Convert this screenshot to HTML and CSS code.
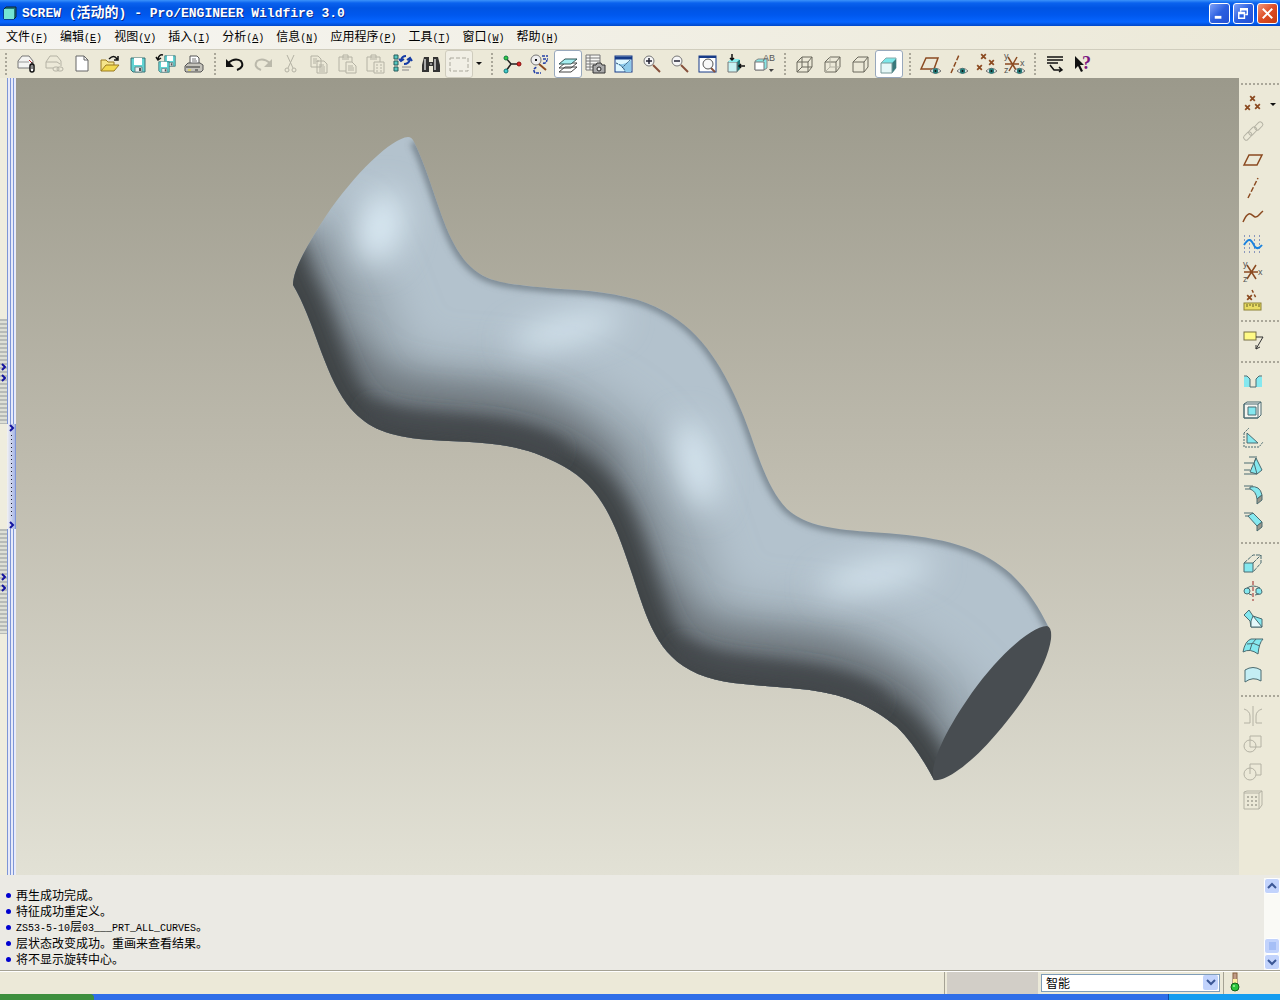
FILE: index.html
```html
<!DOCTYPE html>
<html lang="zh-CN">
<head>
    <meta charset="UTF-8">
    <meta name="viewport" content="width=device-width, initial-scale=1.0">
    <title>SCREW (活动的) - Pro/ENGINEER Wildfire 3.0</title>
    <link rel="stylesheet" href="styles.css">
</head>
<body>
    <svg class="defs" aria-hidden="true">
        <symbol id="eye" viewBox="0 0 12 8"><path d="M0 4Q6-2 12 4Q6 9 0 4Z" fill="#fff" stroke="#666" stroke-width="1"/><circle cx="6" cy="4" r="3" fill="#267a78" stroke="none"/><circle cx="6" cy="4" r="1" fill="#111" stroke="none"/></symbol>
        <symbol id="cross" viewBox="0 0 6 6"><path d="M1 1L5 5M5 1L1 5" stroke="#8b4a20" stroke-width="1.5"/></symbol>
        <symbol id="floppy" viewBox="0 0 16 16"><path d="M1 1H15V15H3L1 13Z" fill="#62d3d3" stroke="#3a7074"/><path d="M4 1H12V8H4Z" fill="#fff"/><path d="M5 10H12V15H5Z" fill="#eee" stroke="#67898b"/><path d="M9 11H11V14H9Z" fill="#555"/></symbol>
    </svg>

    <header class="title-bar">
        <svg class="app-icon" viewBox="0 0 14 14"><path d="M1 3L3 1H13V11L11 13H1Z" fill="#207878" stroke="#123"/><path d="M1 3H11V13H1Z" fill="#74e4d4"/></svg>
        <h1>SCREW (<span>活动的</span>) - Pro/ENGINEER Wildfire 3.0</h1>
        <div class="window-buttons">
            <button aria-label="最小化"><svg viewBox="0 0 20 20"><path d="M5 14H12" stroke="#fff" stroke-width="3"/></svg></button>
            <button aria-label="还原"><svg viewBox="0 0 20 20"><path d="M7 8V5H14V11H12M7 6H14M5 9H11V15H5ZM5 10H11" fill="none" stroke="#fff" stroke-width="1.5"/></svg></button>
            <button class="close" aria-label="关闭"><svg viewBox="0 0 20 20"><path d="M5 5L15 15M15 5L5 15" stroke="#fff" stroke-width="2"/></svg></button>
        </div>
    </header>

    <nav class="menu-bar">
        <button>文件<span>(<u>F</u>)</span></button>
        <button>编辑<span>(<u>E</u>)</span></button>
        <button>视图<span>(<u>V</u>)</span></button>
        <button>插入<span>(<u>I</u>)</span></button>
        <button>分析<span>(<u>A</u>)</span></button>
        <button>信息<span>(<u>N</u>)</span></button>
        <button>应用程序<span>(<u>P</u>)</span></button>
        <button>工具<span>(<u>T</u>)</span></button>
        <button>窗口<span>(<u>W</u>)</span></button>
        <button>帮助<span>(<u>H</u>)</span></button>
    </nav>

    <div class="toolbar">
        <i class="grip"></i>
        <button aria-label="设置工作目录"><svg viewBox="0 0 24 24"><path d="M4 9L8 4H15L19 9V16H4Z" fill="#f4f4f2" stroke="#777"/><path d="M4 10H15" stroke="#999"/><path d="M15 8L18 11" stroke="#b22"/><rect x="16" y="12" width="4" height="8" rx="2" fill="#fff" stroke="#111" stroke-width="1.5"/><path d="M18 10V17" stroke="#111"/></svg></button>
        <button aria-label="擦除"><svg viewBox="0 0 24 24" class="off"><path d="M4 10L8 4H15L19 9V14M4 10V16H11M4 10H15L18 12"/><rect x="11" y="15" width="6" height="4" rx="2"/><rect x="15" y="15" width="6" height="4" rx="2"/></svg></button>
        <button aria-label="新建"><svg viewBox="0 0 24 24"><path d="M6 4H14L18 8V19H6Z" fill="#fff" stroke="#666"/><path d="M14 4V8H18" fill="none" stroke="#666"/></svg></button>
        <button aria-label="打开"><svg viewBox="0 0 24 24"><path d="M3 19V8H8L10 10H16V13" fill="#f5e58a" stroke="#9a7b22"/><path d="M3 19L8 13H21L16 19Z" fill="#f2d94e" stroke="#9a7b22"/><path d="M11 7Q16 2 19 7M20 4V8H16" fill="none" stroke="#111" stroke-width="1.5"/></svg></button>
        <button aria-label="保存"><svg viewBox="0 0 24 24"><use href="#floppy" x="4" y="5" width="16" height="16"/></svg></button>
        <button aria-label="保存副本"><svg viewBox="0 0 24 24"><use href="#floppy" x="10" y="3" width="12" height="12"/><use href="#floppy" x="4" y="9" width="12" height="12"/><path d="M9 3Q5 2 4 7M2 5L4 8L7 6" fill="none" stroke="#111" stroke-width="1.5"/></svg></button>
        <button aria-label="打印"><svg viewBox="0 0 24 24"><path d="M8 12V4H15L17 6V12" fill="#fff" stroke="#555"/><path d="M10 7H14M10 9H15" stroke="#777"/><path d="M3 14L6 11H18L21 13V18L19 20H4L3 19Z" fill="#c4c2ba" stroke="#555"/><path d="M4 15H18" stroke="#333"/><path d="M6 18H9" stroke="#ed2"/><path d="M13 18H16" stroke="#333"/></svg></button>
        <i class="grip"></i>
        <button aria-label="撤消"><svg viewBox="0 0 24 24"><path d="M5 11Q12 5 18 9Q22 15 14 18" fill="none" stroke="#111" stroke-width="2"/><path d="M3 7V15H11Z" fill="#111"/></svg></button>
        <button aria-label="重做"><svg viewBox="0 0 24 24"><path d="M19 11Q12 5 6 9Q2 15 10 18" fill="none" stroke="#bbb9ab" stroke-width="2"/><path d="M21 7V15H13Z" fill="#bbb9ab"/></svg></button>
        <button aria-label="剪切"><svg viewBox="0 0 24 24" class="off"><path d="M8 3L14 16M15 3L9 16"/><circle cx="8" cy="18" r="2"/><circle cx="15" cy="18" r="2"/></svg></button>
        <button aria-label="复制"><svg viewBox="0 0 24 24" class="off"><path d="M4 4H11L14 7V15H4ZM6 7H10M6 9H12M6 11H9M10 9H17L20 12V21H10ZM12 13H17M12 15H18M12 17H18M12 19H18"/></svg></button>
        <button aria-label="粘贴"><svg viewBox="0 0 24 24" class="off"><path d="M4 5H17V10M4 5V19H11M8 6V3H13V6M7 7H14M11 10H17L21 14V21H11ZM13 14H18M13 16H19M13 18H19"/></svg></button>
        <button aria-label="选择性粘贴"><svg viewBox="0 0 24 24" class="off"><path d="M4 5H17V10M4 5V19H11M8 6V3H13V6M7 7H14M11 10H21V21H11ZM13 13H15M17 13H19M13 16H15M17 16H19M13 19H15M17 19H19"/></svg></button>
        <button aria-label="再生"><svg viewBox="0 0 24 24"><path d="M3 3H7V7H3ZM3 9H7V13H3ZM3 15H7V19H3Z" fill="#55c8c0" stroke="#285b5b"/><path d="M10 8Q11 4 15 4M19 7Q18 12 13 12M16 8L19 6L21 9M8 7L10 9L13 7" fill="none" stroke="#153ca5" stroke-width="2"/><path d="M11 15H20M11 18H18" stroke="#888"/></svg></button>
        <button aria-label="查找"><svg viewBox="0 0 24 24"><path d="M5 5H10V10H14V5H19L21 13V20H14V14H10V20H3V13Z" fill="#333"/><path d="M6 7V18M16 7V18" stroke="#aaa" stroke-width="2"/><path d="M11 12H13" stroke="#eee"/></svg></button>
        <button class="framed" aria-label="选取框"><svg viewBox="0 0 24 24"><rect x="3" y="6" width="18" height="13" fill="none" stroke="#aaa89c" stroke-dasharray="4 2"/></svg></button>
        <button class="drop" aria-label="更多选取"><svg viewBox="0 0 12 12"><path d="M3 4H9L6 7Z" fill="#111"/></svg></button>
        <i class="grip"></i>
        <button aria-label="旋转中心"><svg viewBox="0 0 24 24"><path d="M6 6L11 12H20M11 12L6 19" fill="none" stroke="#222" stroke-width="1.5"/><circle cx="6" cy="6" r="2" fill="#3c4" stroke="#174"/><circle cx="19" cy="12" r="2" fill="#d22" stroke="#811"/><circle cx="6" cy="19" r="2" fill="#4cc" stroke="#177"/></svg></button>
        <button aria-label="定向模式"><svg viewBox="0 0 24 24"><circle cx="8" cy="8" r="5" fill="#eee" stroke="#777"/><path d="M8 7V9" stroke="#111" stroke-width="2"/><path d="M11 12L18 18" stroke="#8b4a20" stroke-width="2"/><path d="M14 4H20M15 7H20M15 11Q18 12 19 8M7 21Q4 17 9 15M8 21H13" fill="none" stroke="#2440a8" stroke-dasharray="3 1" stroke-width="1.5"/></svg></button>
        <button class="active" aria-label="层"><svg viewBox="0 0 24 24"><path d="M3 20L9 15H21L15 20ZM3 16L9 11H21L15 16Z" fill="#fff" stroke="#444"/><path d="M3 12L9 7H21L15 12Z" fill="#a5edf0" stroke="#355"/></svg></button>
        <button aria-label="视图管理器"><svg viewBox="0 0 24 24"><path d="M2 3H16V18H2ZM6 3V18M2 6H16M2 9H16M2 12H16M2 15H16" fill="#f7f7f4" stroke="#777"/><path d="M9 13H12L13 11H17L18 13H21V21H9Z" fill="#aaa" stroke="#333"/><circle cx="15" cy="17" r="2" fill="#eee" stroke="#222"/></svg></button>
        <button aria-label="重画"><svg viewBox="0 0 24 24"><rect x="3" y="4" width="17" height="16" fill="#dff7ff" stroke="#173b87"/><path d="M3 6H20" stroke="#173b87" stroke-width="3"/><path d="M4 12Q11 14 13 20H19V8Q14 13 4 12" fill="#8ec9ea"/><path d="M4 11Q12 14 13 20M10 16L18 8" fill="none" stroke="#357" stroke-dasharray="2 1"/></svg></button>
        <button aria-label="放大"><svg viewBox="0 0 24 24"><path d="M13 13L20 20" stroke="#86503b" stroke-width="2"/><circle cx="9" cy="9" r="5" fill="#f5f5f5" stroke="#777"/><path d="M6 9H12M9 6V12" stroke="#223" stroke-width="1.5"/></svg></button>
        <button aria-label="缩小"><svg viewBox="0 0 24 24"><path d="M13 13L20 20" stroke="#86503b" stroke-width="2"/><circle cx="9" cy="9" r="5" fill="#f5f5f5" stroke="#777"/><path d="M6 9H12" stroke="#223" stroke-width="1.5"/></svg></button>
        <button aria-label="重新调整"><svg viewBox="0 0 24 24"><rect x="3" y="4" width="17" height="16" fill="#fff" stroke="#173b87"/><path d="M3 5H20" stroke="#173b87" stroke-width="2"/><path d="M15 16L19 20" stroke="#86503b" stroke-width="2"/><circle cx="12" cy="12" r="5" fill="#f8f8f8" stroke="#555"/></svg></button>
        <button aria-label="重定向"><svg viewBox="0 0 24 24"><path d="M4 10L7 8H16V17L13 20H4Z" fill="#267c7c"/><path d="M4 10H13V20H4Z" fill="#c9f3f3" stroke="#777"/><path d="M4 10L7 7H16L13 10Z" fill="#8ee"/><path d="M8 2V8M6 6L8 8L10 6M21 14H15M17 12L15 14L17 16" fill="none" stroke="#111" stroke-width="1.5"/></svg></button>
        <button aria-label="保存的视图"><svg viewBox="0 0 24 24"><path d="M3 9L6 7H15V16L12 18H3Z" fill="#88e5e4" stroke="#888"/><path d="M3 10H12V18H3Z" fill="#fff" stroke="#777"/><text x="11" y="9">AB</text><path d="M17 17H22L19 20Z" fill="#444"/></svg></button>
        <i class="grip"></i>
        <button aria-label="线框"><svg viewBox="0 0 24 24" class="wire"><path d="M4 10H15V20H4ZM9 5H19V15H9ZM4 10L9 5M15 10L19 5M4 20L9 15M15 20L19 15"/></svg></button>
        <button aria-label="隐藏线"><svg viewBox="0 0 24 24" class="wire"><path d="M4 10H15V20H4ZM4 10L9 5H19V15L15 20M15 10L19 5"/><path class="faint" d="M9 5V15H19M4 20L9 15"/></svg></button>
        <button aria-label="无隐藏线"><svg viewBox="0 0 24 24" class="wire"><path d="M4 10H15V20H4ZM4 10L9 5H19V15L15 20M15 10L19 5"/></svg></button>
        <button class="active" aria-label="着色"><svg viewBox="0 0 24 24"><path d="M4 11L9 6H19V16L15 21Z" fill="#7ce8ea" stroke="#8aa"/><path d="M15 11L19 7V16L15 21Z" fill="#39797c"/><path d="M4 11H15V21H4Z" fill="#e6f8f8" stroke="#799"/></svg></button>
        <i class="grip"></i>
        <button aria-label="基准平面显示"><svg viewBox="0 0 24 24" class="datum"><path d="M3 17L8 6H20L16 17Z"/><use href="#eye" x="12" y="15" width="11" height="8"/></svg></button>
        <button aria-label="基准轴显示"><svg viewBox="0 0 24 24" class="datum"><path d="M5 21L13 3" stroke-dasharray="5 2"/><use href="#eye" x="11" y="15" width="11" height="8"/></svg></button>
        <button aria-label="基准点显示"><svg viewBox="0 0 24 24"><use href="#cross" x="6" y="1" width="7" height="7"/><use href="#cross" x="14" y="7" width="7" height="7"/><use href="#cross" x="2" y="12" width="7" height="7"/><use href="#eye" x="12" y="15" width="11" height="8"/></svg></button>
        <button aria-label="坐标系显示"><svg viewBox="0 0 24 24" class="datum"><path d="M3 12H17M6 5L14 18M15 5L7 19"/><text x="2" y="7">y</text><text x="2" y="21">z</text><text x="18" y="14">x</text><use href="#eye" x="12" y="15" width="11" height="8"/></svg></button>
        <i class="grip"></i>
        <button aria-label="命令设置"><svg viewBox="0 0 24 24"><path d="M4 5H20M4 8H20M4 11H15M7 13L11 18H18M16 15L19 18L16 20" fill="none" stroke="#111" stroke-width="1.5"/></svg></button>
        <button aria-label="上下文帮助"><svg viewBox="0 0 24 24"><path d="M4 4V17L7 14L10 20L12 19L9 13H13Z" fill="#111"/><text class="question" x="11" y="17">?</text></svg></button>
    </div>

    <main class="workspace">
        <aside class="sash">
            <div class="sash-strip">
                <button class="sash-grip" aria-label="展开导航器"><svg viewBox="0 0 7 20"><path d="M2 2L5 5L2 8M2 13L5 16L2 19"/></svg></button>
                <button class="sash-grip" aria-label="展开浏览器"><svg viewBox="0 0 7 20"><path d="M2 2L5 5L2 8M2 13L5 16L2 19"/></svg></button>
            </div>
            <div class="sash-lines">
                <button class="sash-handle" aria-label="展开面板"><svg viewBox="0 0 7 8"><path d="M2 1L5 4L2 7"/></svg><i></i><svg viewBox="0 0 7 8"><path d="M2 1L5 4L2 7"/></svg></button>
            </div>
        </aside>

        <section class="viewport" aria-label="模型">
            <svg viewBox="16 78 1223 797">
                <defs>
                    <clipPath id="body-clip">
                        <path d="M293 285C293 268 310 241 326 216C355 173 392 138 408 137Q412 137 414 142C430 174 439 216 454 244C471 276 491 282 520 285C565 291 597 288 638 300C694 318 720 360 741 410C756 445 764 485 787 509C810 530 846 530 896 534C953 539 985 551 1011 574C1029 591 1039 608 1049 628L1000 720L934 780C923 759 911 741 897 727C871 706 844 693 800 689C755 684 719 686 690 670C653 650 645 611 630 568C614 520 600 486 563 466C514 438 471 444 419 439C385 435 365 427 347 404C323 371 314 320 293 285Z"/>
                    </clipPath>
                    <filter id="blur-s" x="-20%" y="-20%" width="140%" height="140%"><feGaussianBlur stdDeviation="9"/></filter>
                    <filter id="blur-m" x="-20%" y="-20%" width="140%" height="140%"><feGaussianBlur stdDeviation="16"/></filter>
                    <filter id="blur-l" x="-50%" y="-50%" width="200%" height="200%"><feGaussianBlur stdDeviation="22"/></filter>
                    <filter id="blur-xs" x="-20%" y="-20%" width="140%" height="140%"><feGaussianBlur stdDeviation="3"/></filter>
                    <path id="low-edge" d="M276 240L293 285C314 320 323 371 347 404C365 427 385 435 419 439C471 444 514 438 563 466C600 486 614 520 630 568C645 611 653 650 690 670C719 686 755 684 800 689C844 693 871 706 897 727C911 741 923 759 934 780L950 820"/>
                    <path id="top-edge" d="M414 142C430 174 439 216 454 244C471 276 491 282 520 285C565 291 597 288 638 300C694 318 720 360 741 410C756 445 764 485 787 509C810 530 846 530 896 534C953 539 985 551 1011 574C1029 591 1039 608 1049 628"/>
                </defs>
                <g clip-path="url(#body-clip)" fill="none">
                    <path d="M280 130H1060V790H280Z" fill="#b3c2cd"/>
                    <use href="#low-edge" stroke="#97a4ad" stroke-width="160" filter="url(#blur-l)"/>
                    <!-- flat turns are shaded deeper than the steep ones -->
                    <g stroke="#727b82" stroke-width="54" filter="url(#blur-m)">
                        <path d="M330 350C365 410 430 405 500 415C550 424 580 450 600 480"/>
                        <path d="M645 590C675 655 730 650 800 660C850 666 890 690 915 720"/>
                    </g>
                    <use href="#low-edge" stroke="#70787f" stroke-width="70" filter="url(#blur-m)"/>
                    <use href="#low-edge" stroke="#3f4447" stroke-width="44" filter="url(#blur-s)"/>
                    <g stroke="#44494d" stroke-width="20" filter="url(#blur-s)">
                        <path d="M365 412C420 430 500 420 560 455"/>
                        <path d="M675 650C740 678 820 665 880 705"/>
                    </g>
                    <g fill="#dbebf5" filter="url(#blur-m)">
                        <ellipse cx="380" cy="228" rx="22" ry="38" transform="rotate(15 380 228)"/>
                        <ellipse cx="566" cy="330" rx="58" ry="12" transform="rotate(-14 566 330)"/>
                        <ellipse cx="696" cy="465" rx="17" ry="46" transform="rotate(-14 696 465)"/>
                        <ellipse cx="876" cy="575" rx="60" ry="12" transform="rotate(-12 876 575)"/>
                    </g>
                    <use href="#top-edge" stroke="#78858f" stroke-width="8" filter="url(#blur-xs)"/>
                </g>
                <path d="M934 780C929 769 941 738 967 700C993 661 1029 627 1047 626Q1052 627 1051 639C1047 668 1020 708 991 740C967 767 944 782 934 780Z" fill="#484d51"/>
            </svg>
        </section>

        <aside class="feature-bar">
            <i class="grip"></i>
            <div class="tool-row">
                <button aria-label="基准点"><svg viewBox="0 0 24 24"><use href="#cross" x="8" y="3" width="7" height="7"/><use href="#cross" x="3" y="12" width="7" height="7"/><use href="#cross" x="13" y="11" width="7" height="7"/></svg></button>
                <button class="drop" aria-label="更多基准点"><svg viewBox="0 0 12 12"><path d="M3 5H9L6 8Z" fill="#111"/></svg></button>
            </div>
            <button aria-label="链接"><svg viewBox="0 0 24 24" class="off"><rect x="2" y="14" width="9" height="5" rx="2" transform="rotate(-45 6 16)"/><rect x="7" y="9" width="9" height="5" rx="2" transform="rotate(-45 11 11)"/><rect x="13" y="4" width="9" height="5" rx="2" transform="rotate(-45 17 6)"/></svg></button>
            <button aria-label="基准平面"><svg viewBox="0 0 24 24" class="datum"><path d="M3 17L8 7H21L16 17Z"/></svg></button>
            <button aria-label="基准轴"><svg viewBox="0 0 24 24" class="datum"><path d="M7 22L17 2" stroke-dasharray="5 2"/></svg></button>
            <button aria-label="曲线"><svg viewBox="0 0 24 24" class="datum"><path d="M2 18C8 4 11 12 14 13C17 14 18 10 22 7"/></svg></button>
            <button aria-label="草绘"><svg viewBox="0 0 24 24"><path d="M3 4H21M3 8H21M3 12H21M3 16H21M3 20H21" stroke="#2845a0" stroke-dasharray="1 4"/><path d="M3 13C9 3 11 10 14 15Q17 18 21 13" fill="none" stroke="#1b83df" stroke-width="2"/></svg></button>
            <button aria-label="坐标系"><svg viewBox="0 0 24 24" class="datum"><path d="M3 12H17M6 5L15 19M15 5L6 19"/><text x="2" y="7">y</text><text x="2" y="22">z</text><text x="17" y="15">x</text></svg></button>
            <button aria-label="分析特征"><svg viewBox="0 0 24 24"><use href="#cross" x="5" y="6" width="7" height="7"/><path d="M11 2L15 10" stroke="#8b4a20" stroke-width="1.5" stroke-dasharray="3 2"/><rect x="3" y="15" width="17" height="7" fill="#e9dc63" stroke="#8c8235"/><path d="M6 16V19M9 16V18M12 16V19M15 16V18M18 16V19" stroke="#665e28"/></svg></button>
            <i class="grip"></i>
            <button aria-label="注释"><svg viewBox="0 0 24 24"><rect x="3" y="3" width="12" height="8" fill="#fffa86" stroke="#777043"/><path d="M15 8H22L15 20M15 16V20L19 18" fill="none" stroke="#333"/></svg></button>
            <i class="grip"></i>
            <button aria-label="孔"><svg viewBox="0 0 24 24" class="solid"><path d="M3 7V17H9V9L6 6ZM21 7V17H15V9L18 6Z" stroke="none"/><path d="M3 6H6L9 9V17H15V9L18 6H21" fill="none"/></svg></button>
            <button aria-label="壳"><svg viewBox="0 0 24 24" class="solid"><path d="M3 6L6 4H20V17L17 20H3Z" fill="#f5f4ef"/><path d="M3 6H17V20H3ZM17 6L20 4" fill="none"/><path d="M7 9H15V17H7Z"/></svg></button>
            <button aria-label="筋"><svg viewBox="0 0 24 24" class="solid"><path d="M3 7V21H18L22 16M3 7L8 2" fill="none" stroke-dasharray="2 1"/><path d="M6 7V17H17Z"/></svg></button>
            <button aria-label="拔模"><svg viewBox="0 0 24 24" class="solid"><path d="M9 18L15 4L21 16L16 20Z"/><path d="M8 3H16M3 9H12M3 16H9M3 20H16M15 4L13 9L16 20" fill="none"/></svg></button>
            <button aria-label="倒圆角"><svg viewBox="0 0 24 24" class="solid"><path d="M9 5Q19 3 21 13L16 17Q15 9 9 7Z"/><path d="M16 17L21 13V18L16 22Z" fill="#99978b"/><path d="M3 4H12M4 7H9" fill="none"/></svg></button>
            <button aria-label="倒角"><svg viewBox="0 0 24 24" class="solid"><path d="M7 6L12 3L21 12L16 16Z"/><path d="M16 16L21 12V17L16 21Z" fill="#99978b"/><path d="M3 3H12M4 6H7" fill="none"/></svg></button>
            <i class="grip"></i>
            <button aria-label="拉伸"><svg viewBox="0 0 24 24" class="solid"><path d="M3 12H12V21H3Z"/><path d="M3 12L12 4H20V12L12 21M12 12L20 4" fill="none" stroke-dasharray="4 1"/></svg></button>
            <button aria-label="旋转"><svg viewBox="0 0 24 24" class="solid"><circle cx="6" cy="12" r="3"/><path d="M15 10Q20 7 21 13Q20 17 15 14Z"/><path d="M6 9Q12 5 19 9M8 15L11 16M14 16L18 15" fill="none"/><path d="M12 2V22" stroke="#922" stroke-dasharray="4 2"/></svg></button>
            <button aria-label="扫描混合"><svg viewBox="0 0 24 24" class="solid"><path d="M3 8L8 3L12 9L21 12V20H10L9 14Z"/><path d="M10 14L12 9L21 20H10V14Z" fill="#e4f8fa"/></svg></button>
            <button aria-label="边界混合"><svg viewBox="0 0 24 24" class="solid"><path d="M2 17Q4 6 10 4H22Q18 8 17 19Q9 13 2 17Z"/><path d="M6 9Q13 7 19 11M15 4Q10 8 9 15" fill="none"/></svg></button>
            <button aria-label="造型"><svg viewBox="0 0 24 24" class="solid"><path class="pale" d="M4 7Q12 2 20 7V18Q12 13 4 19Z"/></svg></button>
            <i class="grip"></i>
            <button aria-label="镜像"><svg viewBox="0 0 24 24" class="off"><path d="M12 2V22M3 5Q9 7 9 12V19H3M21 5Q15 7 15 12V19H21"/></svg></button>
            <button aria-label="合并"><svg viewBox="0 0 24 24" class="off"><circle cx="9" cy="14" r="6"/><path d="M9 4H20V15H9Z"/></svg></button>
            <button aria-label="修剪"><svg viewBox="0 0 24 24" class="off"><circle cx="9" cy="14" r="6"/><path d="M9 14V4H20V15H15"/></svg></button>
            <button aria-label="阵列"><svg viewBox="0 0 24 24" class="off"><path d="M3 4L6 3H21V17L18 21H3ZM3 5H18V21M18 5L21 3"/><path d="M6 9H17M6 13H17M6 17H17" stroke-width="2" stroke-dasharray="2 2"/></svg></button>
        </aside>
    </main>

    <section class="messages">
        <ul>
            <li><p>再生成功完成。</p></li>
            <li><p>特征成功重定义。</p></li>
            <li><p><span>ZS53-5-10</span>层<span>03___PRT_ALL_CURVES</span>。</p></li>
            <li><p>层状态改变成功。重画来查看结果。</p></li>
            <li><p>将不显示旋转中心。</p></li>
        </ul>
        <div class="scrollbar">
            <button aria-label="向上滚动"><svg viewBox="0 0 14 14"><path d="M3 9L7 5L11 9" fill="none" stroke="#3b5796" stroke-width="2"/></svg></button>
            <i class="track"></i>
            <button aria-label="滑块"><svg viewBox="0 0 14 14"><path d="M4 4H11M4 6H11M4 8H11M4 10H11" stroke="#89aaf0"/></svg></button>
            <button aria-label="向下滚动"><svg viewBox="0 0 14 14"><path d="M3 5L7 9L11 5" fill="none" stroke="#3b5796" stroke-width="2"/></svg></button>
        </div>
    </section>

    <footer class="status-bar">
        <div class="status-cell"></div>
        <div class="select-box">
            <select aria-label="选取过滤器"><option>智能</option></select>
            <svg viewBox="0 0 15 15"><rect width="15" height="15" rx="2" fill="#c2d3fc"/><path d="M4 5L8 9L12 5" fill="none" stroke="#3b5796" stroke-width="2"/></svg>
        </div>
        <div class="traffic"><svg viewBox="0 0 12 20"><rect x="4" y="1" width="4" height="11" fill="#c09a86" stroke="#85613f"/><path d="M4 7H8V11H4Z" fill="#fff0a0"/><circle cx="6" cy="15" r="4" fill="#2cc43c" stroke="#126018"/><circle cx="5" cy="14" r="1" fill="#a5f5a5"/></svg></div>
    </footer>
    <div class="taskbar"><i></i><b></b></div>
</body>
</html>
```
FILE: styles.css
```css
* {
    box-sizing: border-box;
}

body {
    display: flex;
    flex-direction: column;
    min-height: 100vh;
    margin: 0;
    background: #ece9d8;
    color: #000;
    font-family: "Noto Sans CJK SC", sans-serif;
    font-size: 12px;
}

button {
    flex: none;
    margin: 0;
    padding: 0;
    border: 0;
    background: none;
    color: inherit;
    font: inherit;
}

svg {
    display: block;
}

.defs {
    position: absolute;
    width: 0;
    height: 0;
}

/* title bar */
.title-bar {
    display: flex;
    align-items: center;
    height: 26px;
    padding: 0 2px 0 3px;
    background: linear-gradient(#3c93fa 0, #0a62ee 3px, #0054e3 8px, #0058ee 15px, #0665ff 22px, #0047c8 26px);
}

.app-icon {
    width: 14px;
    height: 14px;
}

h1 {
    flex: 1;
    margin: 0 0 0 5px;
    color: #fff;
    font-family: "Liberation Mono", "Noto Sans CJK SC", monospace;
    font-size: 13px;
    line-height: 20px;
    white-space: pre;
    text-shadow: 1px 1px #0a2c8c;
}

h1 span {
    font-size: 14px;
}

.window-buttons {
    display: flex;
    gap: 3px;
}

.window-buttons button {
    width: 21px;
    height: 21px;
    border: 1px solid #fff;
    border-radius: 3px;
    background: linear-gradient(135deg, #7fa2f8, #2c5fe0 50%, #2450d4);
}

.window-buttons .close {
    background: linear-gradient(135deg, #f0977c, #dd4c24 50%, #c43c12);
}

/* menu */
.menu-bar {
    display: flex;
    gap: 12px;
    height: 24px;
    padding-left: 6px;
    border-bottom: 1px solid #d0cdbd;
    background: linear-gradient(to right, #f6f5f1, #ece9d8);
}

.menu-bar button {
    line-height: 20px;
}

.menu-bar span,
.messages span {
    font-family: "Liberation Mono", monospace;
    font-size: 10px;
}

/* toolbars */
.toolbar {
    display: flex;
    height: 28px;
    margin-left: -1px;
}

.toolbar button,
.feature-bar button {
    width: 28px;
    height: 28px;
    padding: 2px;
}

.toolbar .grip {
    width: 13px;
    height: 24px;
    margin-top: 3px;
    background: repeating-linear-gradient(#aaa799 0 2px, transparent 2px 4px) center / 2px 100% no-repeat;
}

.toolbar .active,
.toolbar .framed {
    padding: 1px;
    border: 1px solid #98a8bc;
    border-radius: 3px;
    background: #fff;
}

.toolbar .framed {
    border-color: #cfccbd;
    background: #f1efe5;
}

.toolbar .drop,
.feature-bar .drop {
    width: 12px;
    padding: 8px 0;
}

.toolbar text,
.feature-bar text {
    fill: #555;
    stroke: none;
    font: 9px "Liberation Sans", sans-serif;
}

.toolbar .question {
    fill: #7b1680;
    font: bold 18px "Liberation Serif", serif;
}

.off {
    fill: none;
    stroke: #b4b2a4;
}

.wire {
    fill: none;
    stroke: #6b695d;
}

.faint {
    stroke: #b4b2a4;
}

.datum {
    fill: none;
    stroke: #8b4a20;
    stroke-width: 1.5;
}

.solid {
    fill: #85e8ef;
    stroke: #4b6b70;
}

.pale {
    fill: #c4eef4;
}

/* work area */
.workspace {
    display: flex;
    flex: 1;
}

.sash {
    display: flex;
    width: 16px;
    background: #efedde;
}

.sash svg {
    width: 7px;
    fill: none;
    stroke: #1414a0;
    stroke-width: 2;
}

.sash-strip {
    display: flex;
    flex-direction: column;
    justify-content: center;
    gap: 105px;
    width: 7px;
}

.sash-grip {
    width: 7px;
    height: 105px;
    background: repeating-linear-gradient(#b7bbb8 0 2px, #dddfd6 2px 4px);
}

.sash-lines {
    display: flex;
    align-items: center;
    width: 9px;
    background: repeating-linear-gradient(to right, #7e96d6 0 1px, #e7eafa 1px 3px);
}

.sash-handle {
    display: flex;
    flex-direction: column;
    width: 9px;
    height: 105px;
    padding: 0 1px;
    border-right: 1px solid #7e96d6;
    background: linear-gradient(to right, #f2f2f4, #a8b6e6);
}

.sash-handle i {
    flex: 1;
    width: 1px;
    margin: 3px;
    background: repeating-linear-gradient(#223 0 1px, transparent 1px 4px);
}

.viewport {
    flex: 1;
    min-width: 0;
    background: linear-gradient(#9b998b, #bfbcaf 50%, #e2e1d5);
}

.viewport svg {
    width: 100%;
}

.feature-bar {
    width: 41px;
}

.feature-bar .grip {
    display: block;
    height: 13px;
    margin-left: 2px;
    background: repeating-linear-gradient(to right, #aaa799 0 2px, transparent 2px 4px) center / 100% 2px no-repeat;
}

.feature-bar .grip:first-child {
    height: 12px;
}

.feature-bar > button {
    display: block;
}

.tool-row {
    display: flex;
}

/* messages */
.messages {
    display: flex;
    justify-content: space-between;
    height: 96px;
    padding-top: 3px;
    border-bottom: 1px solid #a5a294;
    background: #ebeae4;
}

.messages ul {
    margin: 0;
    padding: 9px 0 0 6px;
    list-style: none;
}

.messages li {
    display: flex;
    align-items: center;
    height: 16px;
    line-height: 16px;
}

.messages p {
    margin: 0;
}

.messages li::before {
    content: "";
    width: 5px;
    height: 5px;
    margin-right: 5px;
    border-radius: 50%;
    background: #0000d0;
}

.scrollbar {
    display: flex;
    flex-direction: column;
    width: 16px;
    background: #fafaf6;
}

.scrollbar button {
    height: 16px;
    border: 1px solid #fff;
    border-radius: 3px;
    background: #c2d3fc;
}

.track {
    flex: 1;
}

/* status */
.status-bar {
    display: flex;
    align-items: center;
    justify-content: flex-end;
    height: 23px;
    border-top: 1px solid #fff;
}

.status-cell {
    width: 94px;
    height: 22px;
    border-left: 1px solid #a5a294;
    background: #d2cec7;
    box-shadow: inset 2px 0 #ece9d8;
}

.select-box {
    position: relative;
    width: 179px;
    margin: 0 3px 0 3px;
}

.select-box select {
    display: block;
    width: 100%;
    height: 18px;
    padding: 0 4px;
    border: 1px solid #7f9db9;
    border-radius: 0;
    background: #fff;
    color: #000;
    font: 12px "Noto Sans CJK SC", sans-serif;
    line-height: 16px;
    appearance: none;
}

.select-box svg {
    position: absolute;
    top: 1px;
    right: 2px;
    width: 15px;
    height: 15px;
    pointer-events: none;
}

.traffic {
    width: 57px;
    height: 22px;
    padding: 0 5px;
    border-left: 1px solid #a5a294;
}

.traffic svg {
    width: 12px;
    height: 20px;
}

/* top edge of the desktop taskbar */
.taskbar {
    display: flex;
    justify-content: space-between;
    height: 6px;
    background: #2f6ee8;
}

.taskbar i {
    width: 94px;
    background: #3d8f3d;
    border-radius: 0 4px 0 0;
}

.taskbar b {
    width: 112px;
    border-left: 1px solid #0c4da8;
    background: #159df0;
}
```
